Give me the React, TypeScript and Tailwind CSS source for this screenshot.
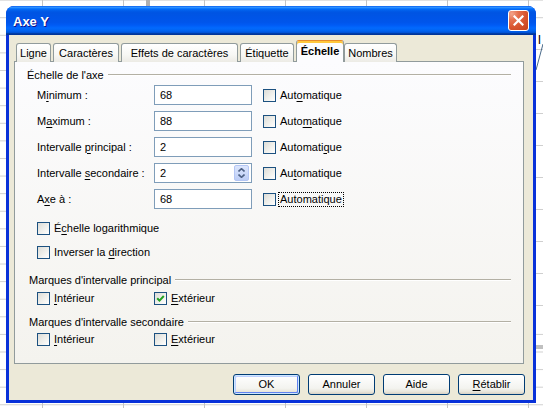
import type { ReactNode } from 'react'
import clsx from 'clsx'

const U = ({ children }: { children: ReactNode }) => <span className="underline decoration-1 underline-offset-[2px]">{children}</span>

const Check = ({ checked }: { checked?: boolean }) => (
  <span className="flex h-[13px] w-[13px] shrink-0 items-center justify-center border border-[#1c5180] bg-[linear-gradient(135deg,#dcdcd7_0%,#f0f0ec_55%,#ffffff_100%)]">
    {checked && (
      <svg width="9" height="9" viewBox="0 0 9 9">
        <path d="M1.2 4.2 L3.5 6.6 L7.8 2" fill="none" stroke="#21a121" strokeWidth="2" />
      </svg>
    )}
  </span>
)

const CheckLabel = ({ checked, focus, children }: { checked?: boolean; focus?: boolean; children: ReactNode }) => (
  <div className="flex items-center gap-[2px]">
    <Check checked={checked} />
    <span className={clsx('border px-[1px] leading-[13px]', focus ? 'border-dotted border-black' : 'border-transparent')}>
      {children}
    </span>
  </div>
)

const Spin = () => (
  <span className="flex h-[16px] w-[15px] flex-col items-center justify-center gap-[2px] rounded-[2px] border border-[#b4c6f4] bg-[linear-gradient(180deg,#dce6fd,#bccdf6)]">
    <svg width="7" height="4" viewBox="0 0 7 4">
      <path d="M0.5 3.5 L3.5 0.7 L6.5 3.5" fill="none" stroke="#4d6185" strokeWidth="1.6" />
    </svg>
    <svg width="7" height="4" viewBox="0 0 7 4">
      <path d="M0.5 0.5 L3.5 3.3 L6.5 0.5" fill="none" stroke="#4d6185" strokeWidth="1.6" />
    </svg>
  </span>
)

interface FieldProps {
  label: ReactNode
  value: string
  auto: ReactNode
  spin?: boolean
  focus?: boolean
}

const Field = ({ label, value, auto, spin, focus }: FieldProps) => (
  <div className="flex h-[20px] items-center">
    <span className="w-[117px]">{label}</span>
    <div className="flex h-[20px] w-[98px] items-center justify-between border border-[#7f9db9] bg-white pl-[5px] pr-[2px]">
      <span>{value}</span>
      {spin && <Spin />}
    </div>
    <div className="ml-[11px]">
      <CheckLabel focus={focus}>{auto}</CheckLabel>
    </div>
  </div>
)

const Group = ({ title, className }: { title: string; className?: string }) => (
  <div className={clsx('flex h-[14px] items-center gap-[4px]', className)}>
    <span>{title}</span>
    <span className="h-[2px] flex-1 border-t border-b border-t-[#b3b0a4] border-b-white" />
  </div>
)

const Btn = ({ children, def }: { children: ReactNode; def?: boolean }) => (
  <button
    className={clsx(
      'h-[21px] w-[67px] rounded-[3px] border border-[#003c74] bg-[linear-gradient(180deg,#ffffff_0%,#f3f3ef_70%,#e8e5da_88%,#d6d0c5_100%)] text-[11px] text-black',
      def && 'shadow-[inset_0_0_0_1px_#cee7ff,inset_-1px_-1px_0_1px_#6082f1,inset_1px_1px_0_1px_#bccfff]',
    )}
  >
    {children}
  </button>
)

const tabs = [
  { label: 'Ligne', w: 'w-[35px]' },
  { label: 'Caractères', w: 'w-[66px]' },
  { label: 'Effets de caractères', w: 'w-[117px]' },
  { label: 'Étiquette', w: 'w-[54px]' },
]

export default function App() {
  return (
    <div className="relative h-[408px] w-[543px] overflow-hidden bg-white bg-[linear-gradient(to_right,#c4c4c4_1px,transparent_1px),linear-gradient(to_bottom,#cfcfcf_1px,transparent_1px)] bg-size-[81px_17.6px] bg-position-[42px_70px] font-['Liberation_Sans',Arial,sans-serif] text-[11px] leading-[13px] text-black">
      {/* bits of the sheet behind the dialog */}
      <div className="absolute left-[146px] top-0 h-[6px] w-[4px] bg-[#b0b0b0]" />
      <div className="absolute right-0 top-[30px] h-[300px] w-[8px] bg-white bg-[linear-gradient(to_bottom,#cfcfcf_1px,transparent_1px)] bg-size-[8px_32px] bg-position-[0_19px]" />
      <span className="absolute left-[538px] top-[33px] text-[13px] leading-[13px]">l</span>
      <svg className="absolute left-[535px] top-[44px]" width="8" height="26" viewBox="0 0 8 26">
        <path d="M8 0 L1 26" stroke="#4a6a8a" strokeWidth="1" />
      </svg>
      <div className="absolute left-[536px] top-[345px] h-[4px] w-[7px] bg-[#c0c0c0]" />

      {/* window */}
      <div className="absolute left-[6px] top-[6px] flex h-[397px] w-[530px] flex-col rounded-t-[8px] bg-[#0831d9]">
        <div className="flex h-[29px] shrink-0 items-center justify-between rounded-t-[8px] bg-[linear-gradient(to_bottom,#0058ee_0%,#3593ff_4%,#288eff_6%,#127dff_8%,#036ffc_10%,#0262ee_14%,#0057e5_20%,#0054e3_24%,#0055eb_56%,#005bf5_66%,#026afe_76%,#0062ef_86%,#0052d6_92%,#0040ab_94%,#003092_100%)] pl-[7px] pr-[7px]">
          <span className="pt-[2px] text-[13px] font-bold leading-[15px] text-white [text-shadow:1px_1px_#0f1089]">Axe Y</span>
          <div className="flex h-[21px] w-[21px] items-center justify-center rounded-[3px] border border-white bg-[radial-gradient(circle_at_15%_15%,#f3a58c_0%,#e5714e_28%,#d8552f_60%,#c3411c_100%)]">
            <svg width="11" height="11" viewBox="0 0 11 11">
              <path d="M1.5 1.5 L9.5 9.5 M9.5 1.5 L1.5 9.5" stroke="white" strokeWidth="2.2" strokeLinecap="square" />
            </svg>
          </div>
        </div>

        <div className="mx-[3px] mb-[3px] flex flex-1 flex-col bg-[#ece9d8] pt-[5px]">
          {/* tabs */}
          <div className="relative z-10 flex h-[22px] items-end pl-[7px]">
            {tabs.map((t) => (
              <div
                key={t.label}
                className={clsx(
                  'mr-[2px] flex h-[19px] items-center justify-center rounded-t-[3px] border border-b-0 border-[#919b9c] bg-[linear-gradient(180deg,#ffffff_0%,#f7f7f4_60%,#ecebe5_100%)]',
                  t.w,
                )}
              >
                {t.label}
              </div>
            ))}
            <div className="flex h-[22px] w-[48px] items-center justify-center rounded-t-[3px] border border-b-0 border-[#919b9c] border-t-[#e68b2c] bg-[#fcfcfe] font-bold shadow-[inset_0_2px_0_#ffc83c]">
              Échelle
            </div>
            <div className="flex h-[19px] w-[53px] items-center justify-center rounded-t-[3px] border border-b-0 border-[#919b9c] bg-[linear-gradient(180deg,#ffffff_0%,#f7f7f4_60%,#ecebe5_100%)]">
              Nombres
            </div>
          </div>

          {/* panel */}
          <div className="-mt-[1px] ml-[5px] mr-[9px] flex h-[303px] flex-col border border-[#919b9c] bg-[linear-gradient(180deg,#fcfcfe_0%,#f4f3ee_100%)] px-[12px] pt-[6px]">
            <Group title="Échelle de l'axe" />
            <div className="ml-[10px] mt-[3px] flex flex-col gap-[6px]">
              <Field label={<>M<U>i</U>nimum :</>} value="68" auto={<>Aut<U>o</U>matique</>} />
              <Field label={<>M<U>a</U>ximum :</>} value="88" auto={<>Auto<U>m</U>atique</>} />
              <Field label={<>Intervalle <U>p</U>rincipal :</>} value="2" auto={<>Automati<U>q</U>ue</>} />
              <Field label={<>Intervalle <U>s</U>econdaire :</>} value="2" spin auto={<>Au<U>t</U>omatique</>} />
              <Field label={<>A<U>x</U>e à :</>} value="68" focus auto="Automatique" />
            </div>
            <div className="ml-[10px] mt-[11px] flex h-[16px] items-center">
              <CheckLabel>É<U>c</U>helle logarithmique</CheckLabel>
            </div>
            <div className="ml-[10px] mt-[8px] flex h-[16px] items-center">
              <CheckLabel>Inverser la <U>d</U>irection</CheckLabel>
            </div>

            <Group title="Marques d'intervalle principal" className="ml-[2px] mt-[13px]" />
            <div className="ml-[10px] mt-[3px] flex h-[16px] items-center">
              <div className="w-[117px]">
                <CheckLabel><U>I</U>ntérieur</CheckLabel>
              </div>
              <CheckLabel checked><U>E</U>xtérieur</CheckLabel>
            </div>

            <Group title="Marques d'intervalle secondaire" className="ml-[2px] mt-[9px]" />
            <div className="ml-[10px] mt-[2px] flex h-[16px] items-center">
              <div className="w-[117px]">
                <CheckLabel><U>I</U>ntérieur</CheckLabel>
              </div>
              <CheckLabel><U>E</U>xtérieur</CheckLabel>
            </div>
          </div>

          {/* buttons */}
          <div className="mt-[10px] flex justify-end gap-[8px] pr-[8px]">
            <Btn def>OK</Btn>
            <Btn>Annuler</Btn>
            <Btn>Aide</Btn>
            <Btn><U>R</U>établir</Btn>
          </div>
        </div>
      </div>
    </div>
  )
}
